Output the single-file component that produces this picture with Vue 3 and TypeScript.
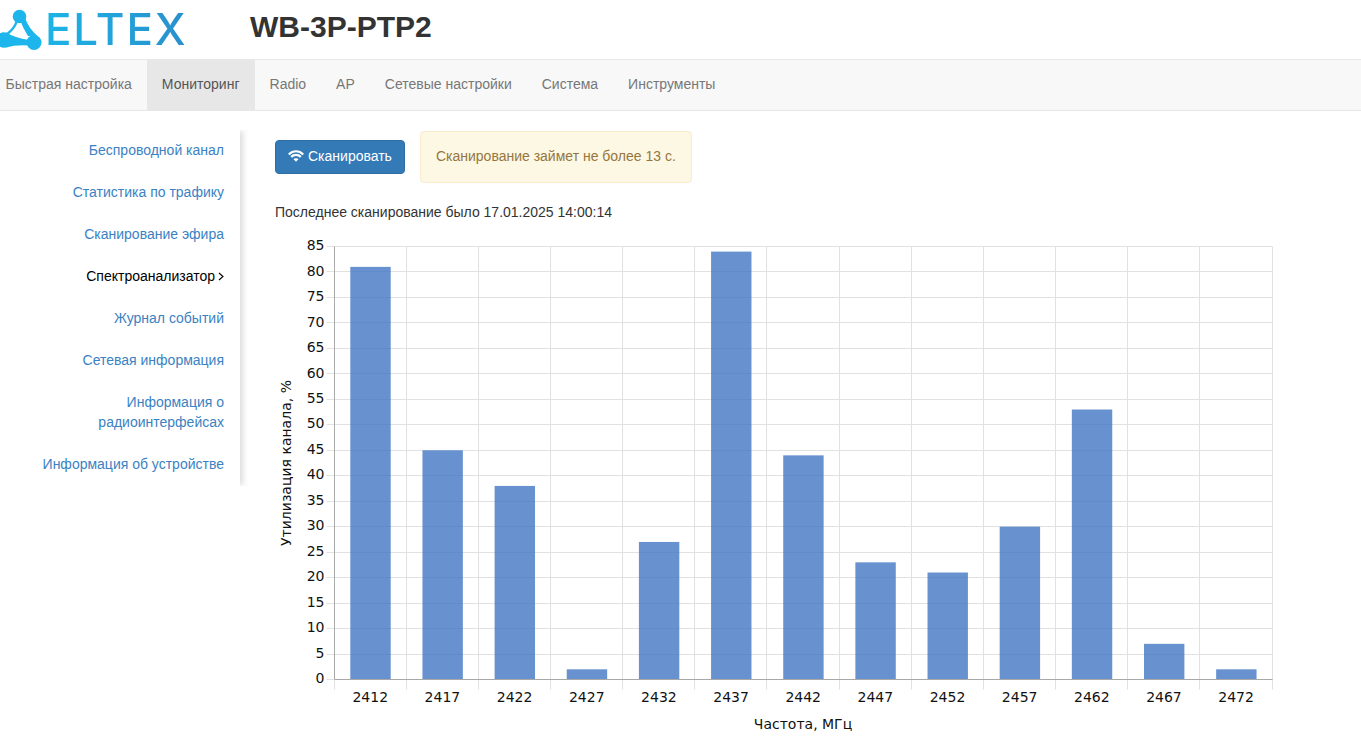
<script setup lang="ts">
const navItems: string[] = ['Быстрая настройка', 'Мониторинг', 'Radio', 'AP', 'Сетевые настройки', 'Система', 'Инструменты']
const sideItems: string[] = ['Беспроводной канал', 'Статистика по трафику', 'Сканирование эфира', 'Спектроанализатор', 'Журнал событий', 'Сетевая информация', 'Информация о радиоинтерфейсах', 'Информация об устройстве']

const ox = 275
const oy = 232
const left = 334.5 - ox
const right = 1272.5 - ox
const bottom = 679.5 - oy
const top = 246.5 - oy
const unit = (bottom - top) / 85
const pitch = (right - left) / 13

const yTicks = Array.from({ length: 18 }, (_, i) => ({
  v: i * 5,
  y: Math.round(bottom - i * 5 * unit - 0.5) + 0.5,
  ly: Math.round(bottom - i * 5 * unit + 3.7),
}))
const data: [number, number][] = [[2412, 81], [2417, 45], [2422, 38], [2427, 2], [2432, 27], [2437, 84], [2442, 44], [2447, 23], [2452, 21], [2457, 30], [2462, 53], [2467, 7], [2472, 2]]
const bars = data.map(([f, v], i) => ({
  f,
  x: left + pitch * i + 15.8,
  cx: left + pitch * i + pitch / 2 - 0.3,
  y: bottom - v * unit,
  h: v * unit,
}))
const xGrid = Array.from({ length: 13 }, (_, i) => Math.floor(left + 72.08 * i) + 0.5).concat(right)
</script>

<template>
  <div class="page">
    <header class="head">
      <div class="brand">
        <svg class="mark" width="44" height="50" viewBox="0 0 44 50">
          <circle cx="19.5" cy="16.5" r="6.8" fill="#1cb6ec" />
          <circle cx="4" cy="40" r="7.8" fill="#1cb6ec" />
          <circle cx="34" cy="42.5" r="7.5" fill="#1cb6ec" />
          <path d="M15.5 21 Q 14 27 6.5 33 L 8.5 34.5 Q 15 29 17.5 23 Z" fill="#1cb6ec" />
          <path d="M21 22 Q 22.5 27 28 36 L 38 36.5 Q 28.5 28 25.5 19 Z" fill="#1cb6ec" />
          <path d="M6 32.5 Q 16 38.5 30 40 L 30 45.5 Q 16 44.5 6 47.5 Z" fill="#1cb6ec" />
        </svg>
        <span class="word">ELTEX</span>
      </div>
      <h1 class="title">WB-3P-PTP2</h1>
    </header>

    <nav class="nav">
      <a v-for="(n, i) in navItems" :key="n" class="nav-item" :class="{ active: i === 1 }">{{ n }}</a>
    </nav>

    <div class="body">
      <aside class="side">
        <a v-for="(s, i) in sideItems" :key="s" class="side-item" :class="{ current: i === 3 }">
          {{ s }}<svg v-if="i === 3" class="chev" width="6" height="9" viewBox="0 0 6 9"><path d="M1 1 L5 4.5 L1 8" fill="none" stroke="#000" stroke-width="1.1" /></svg>
        </a>
      </aside>

      <main class="main">
        <div class="controls">
          <button class="btn" type="button">
            <svg class="wifi" width="16" height="12" viewBox="0 0 16 12">
              <path d="M0.8 4.4 C 4.8 0.2 11.2 0.2 15.2 4.4" fill="none" stroke="#fff" stroke-width="2.2" />
              <path d="M3.2 6.9 C 5.8 4.3 10.2 4.3 12.8 6.9" fill="none" stroke="#fff" stroke-width="2.2" />
              <path d="M5.4 9.1 C 6.9 7.8 9.1 7.8 10.6 9.1 L 8 11.8 Z" fill="#fff" />
            </svg>
            <span>Сканировать</span>
          </button>
          <div class="alert">Сканирование займет не более 13 с.</div>
        </div>
        <p class="last">Последнее сканирование было 17.01.2025 14:00:14</p>

        <svg class="chart" width="1086" height="523" viewBox="0 0 1086 523">
          <g class="grid">
            <line v-for="t in yTicks" :key="'h' + t.v" :x1="left - 8" :x2="right" :y1="t.y" :y2="t.y" />
            <line v-for="x in xGrid" :key="'v' + x" :x1="x" :x2="x" :y1="top" :y2="bottom + 10" />
          </g>
          <g>
            <rect v-for="b in bars" :key="b.f" class="bar" :x="b.x" :y="b.y" width="40.4" :height="b.h" />
          </g>
          <line class="axis" :x1="left" :x2="left" :y1="top" :y2="bottom" />
          <line class="axis" :x1="left" :x2="right" :y1="bottom" :y2="bottom" />
          <g class="labels">
            <text v-for="t in yTicks" :key="'yl' + t.v" :x="left - 10" :y="t.ly" text-anchor="end">{{ t.v }}</text>
            <text v-for="b in bars" :key="'xl' + b.f" :x="b.cx" y="470" text-anchor="middle">{{ b.f }}</text>
            <text class="axis-title" x="528" y="497" text-anchor="middle">Частота, МГц</text>
            <text class="axis-title" transform="translate(15.5 231) rotate(-90)" text-anchor="middle">Утилизация канала, %</text>
          </g>
        </svg>
      </main>
    </div>
  </div>
</template>

<style scoped>
.page {
  width: 1361px;
  height: 755px;
  overflow: hidden;
  font-family: "Liberation Sans", Arial, sans-serif;
  font-size: 14px;
  line-height: 20px;
  color: #333;
  background: #fff;
}
.head {
  height: 59px;
  display: flex;
  align-items: center;
}
.brand {
  width: 250px;
  height: 59px;
  display: flex;
  align-items: flex-start;
  flex: none;
}
.mark {
  flex: none;
  display: block;
}
.word {
  margin-left: 1px;
  margin-top: 3px;
  font-family: Inter, sans-serif;
  font-size: 44px;
  line-height: 53px;
  font-weight: 500;
  letter-spacing: 1.8px;
  background: linear-gradient(90deg, #1cb4e6, #2a8fcc);
  -webkit-background-clip: text;
  background-clip: text;
  color: transparent;
}
.title {
  margin: -7px 0 0;
  font-size: 30px;
  line-height: 33px;
  font-weight: 700;
  color: #333;
}
.nav {
  height: 52px;
  box-sizing: border-box;
  display: flex;
  background: #f8f8f8;
  border-top: 1px solid #e7e7e7;
  border-bottom: 1px solid #e7e7e7;
}
.nav-item {
  padding: 14px 15px 16px;
  color: #777;
  white-space: nowrap;
}
.nav-item:first-child {
  margin-left: -9.4px;
}
.nav-item.active {
  background: #e7e7e7;
  color: #555;
}
.body {
  display: flex;
  align-items: flex-start;
}
.side {
  width: 240px;
  margin-top: 19px;
  box-sizing: border-box;
  flex: none;
  display: flex;
  flex-direction: column;
  background: #fff;
  box-shadow: 4px 0 6px -1px rgba(0, 0, 0, 0.14);
  clip-path: inset(0 -12px 0 0);
}
.side-item {
  padding: 10px 16px 12px 40px;
  text-align: right;
  color: #3a82c3;
}
.side-item.current {
  color: #000;
}
.chev {
  margin-left: 3px;
}
.main {
  padding: 20px 0 0 35px;
  flex: 1;
  min-width: 0;
}
.controls {
  display: flex;
  align-items: center;
  gap: 15px;
}
.btn {
  height: 34px;
  padding: 0 12px 2px;
  display: inline-flex;
  align-items: center;
  gap: 4px;
  font: inherit;
  color: #fff;
  background: #337ab7;
  border: 1px solid #2e6da4;
  border-radius: 4px;
}
.wifi {
  display: block;
}
.alert {
  padding: 14px 15px 16px;
  background: #fcf8e3;
  border: 1px solid #faebcc;
  border-radius: 4px;
  color: #967640;
}
.last {
  margin: 19px 0 10px;
}
.chart {
  display: block;
}
.grid line {
  stroke: #e1e1e1;
  stroke-width: 1;
}
.axis {
  stroke: #a8a8a8;
  stroke-width: 1;
}
.bar {
  fill: #4177c3;
  fill-opacity: 0.8;
}
.labels text {
  font-family: "DejaVu Sans", sans-serif;
  font-size: 14px;
  fill: #111;
}
</style>

<style>
html, body { margin: 0; overflow: hidden; }
</style>
